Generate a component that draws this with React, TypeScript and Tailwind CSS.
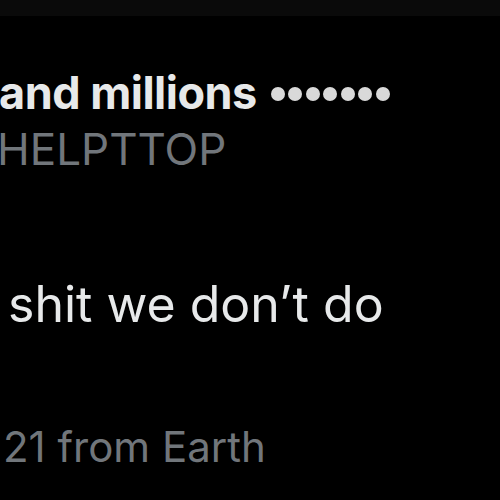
export default function App() {
  return (
    <div
      className="w-[500px] h-[500px] overflow-hidden bg-black"
      style={{ fontFamily: 'Inter, "Noto Sans", sans-serif' }}
    >
      <div className="h-[16px] bg-[#0a0a0a]" />
      <div className="pt-[52px] flex items-center whitespace-nowrap">
        <span className="-ml-[1px] text-[45px] leading-[50px] font-bold text-[#e7e9ea] tracking-[-0.5px]">
          and millions
        </span>
        <span className="ml-[14px] mt-[2px] flex gap-[3.5px]">
          {Array.from({ length: 7 }).map((_, i) => (
            <span key={i} className="block w-[14px] h-[14px] rounded-full bg-[#d9d9d9]" />
          ))}
        </span>
      </div>
      <div className="mt-[7px] -ml-[3px] text-[44px] leading-[48px] text-[#71767b] whitespace-nowrap">
        HELPTTOP
      </div>
      <div className="mt-[103px] pl-[8px] text-[50px] leading-[56px] text-[#e7e9ea] whitespace-nowrap">
        shit we don’t do
      </div>
      <div className="mt-[89px] pl-[3px] text-[42px] leading-[52px] text-[#71767b] whitespace-nowrap">
        21 from Earth
      </div>
    </div>
  );
}
